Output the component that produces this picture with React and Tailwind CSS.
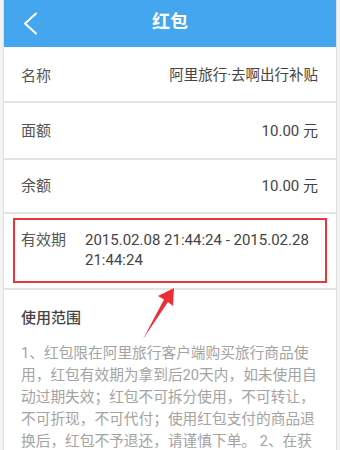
export default function App() {
  const font = { fontFamily: '"Roboto", "Noto Sans CJK SC", "Noto Sans", sans-serif' };
  const lines = [
    "1、红包限在阿里旅行客户端购买旅行商品使",
    "用，红包有效期为拿到后20天内，如未使用自",
    "动过期失效；红包不可拆分使用，不可转让，",
    "不可折现，不可代付；使用红包支付的商品退",
    "换后，红包不予退还，请谨慎下单。 2、在获",
  ];
  return (
    <div className="relative w-[340px] h-[450px] overflow-hidden bg-[#f3f3f3] px-[3px]" style={font}>
      <div className="h-full bg-white border-x border-[#dedede]">
        <div className="h-[47px] bg-[#43a6ee] relative flex items-center justify-center">
          <svg className="absolute left-[19px] top-[12px]" width="16" height="24" viewBox="0 0 16 24">
            <polyline points="13,1.5 2,11.5 13,21.5" fill="none" stroke="#ffffff" strokeWidth="2" strokeLinecap="round" strokeLinejoin="round" />
          </svg>
          <span className="text-white text-[18px] font-semibold leading-none -mt-[4px]">红包</span>
        </div>
        <div className="h-[54px] pt-[4px] flex items-center justify-between pl-[17px] pr-[18px] text-[15px]">
          <span className="text-[#555]">名称</span>
          <span className="text-[#444] text-[14.5px]">阿里旅行·去啊出行补贴</span>
        </div>
        <div className="h-[2px] bg-[#e4e4e4]" />
        <div className="h-[55px] pt-[2px] flex items-center justify-between pl-[17px] pr-[18px] text-[15px]">
          <span className="text-[#555]">面额</span>
          <span className="text-[#444]">10.00 元</span>
        </div>
        <div className="h-[2px] bg-[#e4e4e4]" />
        <div className="h-[52px] flex items-center justify-between pl-[17px] pr-[18px] text-[15px]">
          <span className="text-[#555]">余额</span>
          <span className="text-[#444]">10.00 元</span>
        </div>
        <div className="h-[2px] bg-[#e4e4e4]" />
        <div className="h-[74px] pt-[4px] px-[9px]">
          <div className="h-[65px] border-2 border-[#e8363b] flex pl-[6px] pt-[10px] text-[15px] leading-[20px]">
            <span className="text-[#555] w-[64px] shrink-0">有效期</span>
            <span className="text-[#444]">2015.02.08 21:44:24 - 2015.02.28<br />21:44:24</span>
          </div>
        </div>
        <div className="h-[2px] bg-[#e4e4e4]" />
        <div className="pl-[17px] pt-[18px]">
          <div className="text-[15px] leading-[20px] font-medium text-[#444]">使用范围</div>
          <div className="mt-[14px] text-[14.7px] leading-[22px] text-[#a3a3a3] whitespace-nowrap">
            {lines.map((l, i) => (
              <div key={i}>{l}</div>
            ))}
          </div>
        </div>
      </div>
      <svg className="absolute left-0 top-0 pointer-events-none" width="340" height="450" viewBox="0 0 340 450">
        <polygon points="174,288 158,296 164,299.5 143,339 168,302 173,306" fill="#ec2f35" />
      </svg>
    </div>
  );
}
